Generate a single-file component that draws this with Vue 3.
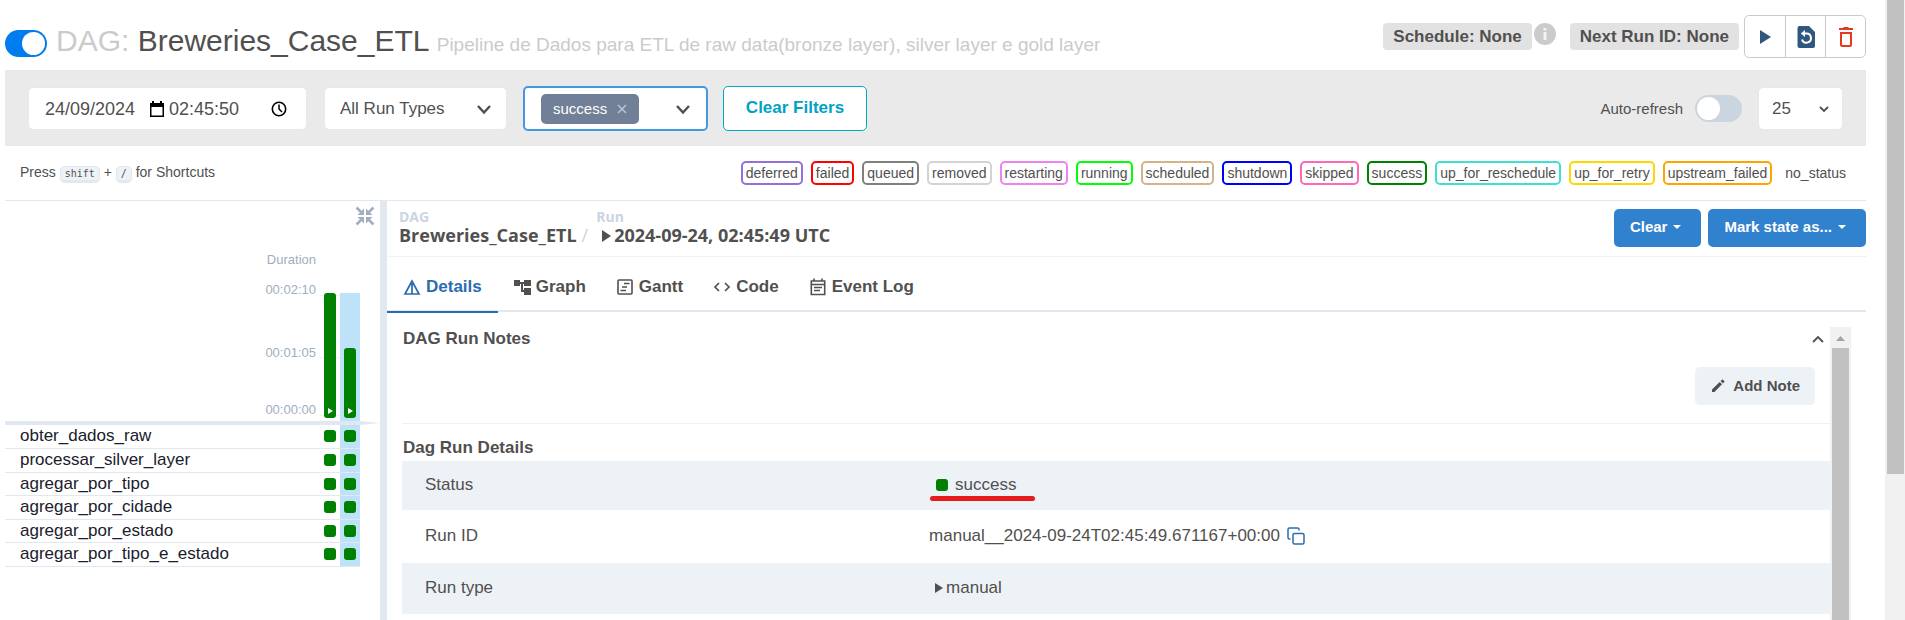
<script setup>
import { ref } from 'vue'

const dagEnabled = ref(true)
const autoRefresh = ref(false)
const runDate = ref('24/09/2024')
const runTime = ref('02:45:50')

const states = [
  { name: 'deferred', color: 'mediumpurple' },
  { name: 'failed', color: 'red' },
  { name: 'queued', color: 'gray' },
  { name: 'removed', color: 'lightgrey' },
  { name: 'restarting', color: 'violet' },
  { name: 'running', color: 'lime' },
  { name: 'scheduled', color: 'tan' },
  { name: 'shutdown', color: 'blue' },
  { name: 'skipped', color: 'hotpink' },
  { name: 'success', color: 'green' },
  { name: 'up_for_reschedule', color: 'turquoise' },
  { name: 'up_for_retry', color: 'gold' },
  { name: 'upstream_failed', color: 'orange' },
  { name: 'no_status', color: 'transparent' },
]

const tasks = [
  'obter_dados_raw',
  'processar_silver_layer',
  'agregar_por_tipo',
  'agregar_por_cidade',
  'agregar_por_estado',
  'agregar_por_tipo_e_estado',
]

const runs = [
  { id: 1, height: 125, selected: false },
  { id: 2, height: 70, selected: true },
]
</script>

<template>
  <div class="page">
    <div class="content">
      <header class="dag-header">
        <input v-model="dagEnabled" class="switch switch-dag" type="checkbox" aria-label="Pause or unpause DAG" />
        <h1 class="title">
          <span class="muted">DAG:</span> Breweries_Case_ETL
          <small class="muted">Pipeline de Dados para ETL de raw data(bronze layer), silver layer e gold layer</small>
        </h1>
        <div class="header-side">
          <span class="label">Schedule: None</span>
          <svg class="info" viewBox="0 0 22 22" aria-hidden="true">
            <circle cx="11" cy="11" r="11" fill="#cbcbcb" />
            <path d="M9.500 5h3v2.500h-3zM9.500 9h3v8h-3z" fill="#f3f3f3" />
          </svg>
          <span class="label">Next Run ID: None</span>
          <div class="btn-group">
            <button type="button" aria-label="Trigger DAG">
              <svg width="24" height="24" viewBox="0 0 24 24"><path d="M7 5l11 7-11 7z" fill="#30587f" /></svg>
            </button>
            <button type="button" aria-label="Reparse DAG">
              <svg width="24" height="24" viewBox="0 0 24 24">
                <path d="M5.500 1H15l6 6v14a2 2 0 0 1-2 2H5.500a2 2 0 0 1-2-2V3a2 2 0 0 1 2-2z" fill="#30587f" />
                <path d="M8 14.500a4.600 4.600 0 1 0 4.500-6H9.500" fill="none" stroke="#fff" stroke-width="2" />
                <path d="M11 5v7L6.800 8.500z" fill="#fff" />
              </svg>
            </button>
            <button type="button" aria-label="Delete DAG">
              <svg width="24" height="24" viewBox="0 0 24 24">
                <path d="M5 3h4l1-1h4l1 1h4v2H5zM6 7h12v13a2 2 0 0 1-2 2H8a2 2 0 0 1-2-2zM8 9v11h8V9z" fill="#e43921" fill-rule="evenodd" />
              </svg>
            </button>
          </div>
        </div>
      </header>

      <section class="filters">
        <div class="field datetime">
          <input v-model="runDate" class="date" type="text" aria-label="Base date" />
          <svg width="16" height="18" viewBox="0 0 16 18"><path d="M3 1h2v2h6V1h2v2h2v14H1V3h2zM2.500 7v8.500h11V7z" fill="#000" fill-rule="evenodd" /></svg>
          <input v-model="runTime" class="time" type="text" aria-label="Base time" />
          <svg width="16" height="16" viewBox="0 0 16 16" fill="none" stroke="#000">
            <circle cx="8" cy="8" r="6.700" stroke-width="1.600" /><path d="M8 3.500V8l3 3" stroke-width="1.500" />
          </svg>
        </div>
        <div class="select-wrap run-types">
          <select class="field" aria-label="Run types"><option>All Run Types</option></select>
          <svg class="chev" width="20" height="20" viewBox="0 0 20 20"><path d="M4 7l6 6.500L16 7" fill="none" stroke="#51504f" stroke-width="2.500" /></svg>
        </div>
        <div class="multi">
          <span class="tag">success
            <button type="button" aria-label="Remove success">
              <svg width="10" height="10" viewBox="0 0 10 10"><path d="M1 1l8 8M9 1L1 9" stroke="#bcc4d0" stroke-width="1.500" /></svg>
            </button>
          </span>
          <svg width="20" height="20" viewBox="0 0 20 20"><path d="M4 7l6 6.500L16 7" fill="none" stroke="#51504f" stroke-width="2.500" /></svg>
        </div>
        <button class="clear-filters" type="button">Clear Filters</button>
        <div class="refresh">
          <label for="auto-refresh">Auto-refresh</label>
          <input id="auto-refresh" v-model="autoRefresh" class="switch switch-refresh" type="checkbox" />
        </div>
        <div class="select-wrap count">
          <select class="field" aria-label="Number of runs"><option>25</option></select>
          <svg class="chev" width="12" height="12" viewBox="0 0 12 12"><path d="M2 4l4 4 4-4" fill="none" stroke="#51504f" stroke-width="1.800" /></svg>
        </div>
      </section>

      <section class="legend">
        <p class="shortcuts">Press <kbd>shift</kbd> + <kbd>/</kbd> for Shortcuts</p>
        <ul class="states">
          <li v-for="s in states" :key="s.name" :style="{ borderColor: s.color }">{{ s.name }}</li>
        </ul>
      </section>

      <main class="main">
        <section class="grid-panel">
          <button class="collapse" type="button" aria-label="Collapse details">
            <svg width="20" height="20" viewBox="0 0 20 20" fill="none" stroke="#a0aec0" stroke-width="2.500">
              <path d="M1.500 1.500L8 8M18.500 1.500L12 8M1.500 18.500L8 12M18.500 18.500L12 12" />
              <path d="M9 2.500V9H2.500z M11 2.500V9h6.500z M9 17.500V11H2.500z M11 17.500V11h6.500z" fill="#a0aec0" stroke="none" />
            </svg>
          </button>
          <div class="chart">
            <div class="axis">
              <span>Duration</span><span>00:02:10</span><span>00:01:05</span><span>00:00:00</span>
            </div>
            <div class="bars">
              <div v-for="r in runs" :key="r.id" class="bar-col" :class="{ selected: r.selected }">
                <div class="bar" :style="{ height: r.height + 'px' }">
                  <svg width="6" height="8" viewBox="0 0 6 8"><path d="M1 1l5 3-5 3z" fill="#fff" /></svg>
                </div>
              </div>
            </div>
          </div>
          <svg class="rule" height="4" viewBox="0 0 375 4" preserveAspectRatio="none" aria-hidden="true"><path d="M0 0h355l20 2-20 2H0z" fill="#e2e8f0" /></svg>
          <table class="tasks">
            <tbody>
              <tr v-for="t in tasks" :key="t">
                <th scope="row">{{ t }}</th>
                <td v-for="r in runs" :key="r.id" :class="{ selected: r.selected }"><span class="square"></span></td>
              </tr>
            </tbody>
          </table>
        </section>

        <section class="details">
          <div class="crumb-bar">
            <nav class="crumbs" aria-label="Breadcrumb">
              <div class="crumb-dag"><span class="crumb-label">DAG</span><a href="#">Breweries_Case_ETL</a></div>
              <span class="slash">/</span>
              <div class="crumb-run"><span class="crumb-label">Run</span>
                <a href="#"><svg class="tri" width="10" height="12" viewBox="0 0 10 12"><path d="M1 0l9 6-9 6z" fill="#51504f" /></svg>2024-09-24, 02:45:49 UTC</a>
              </div>
            </nav>
            <div class="actions">
              <button type="button">Clear <svg width="8" height="4" viewBox="0 0 8 4"><path d="M0 0h8L4 4z" fill="#fff" /></svg></button>
              <button type="button">Mark state as... <svg width="8" height="4" viewBox="0 0 8 4"><path d="M0 0h8L4 4z" fill="#fff" /></svg></button>
            </div>
          </div>

          <div class="tabs" role="tablist">
            <button class="active" type="button" role="tab" aria-selected="true">
              <svg width="18" height="18" viewBox="0 0 18 18" fill="none" stroke="#2b6cb0" stroke-width="1.700"><path d="M9 3L2 16h14zM9 3v13" /></svg>Details
            </button>
            <button type="button" role="tab" aria-selected="false">
              <svg width="18" height="18" viewBox="0 0 18 18"><path d="M1 2h6v2h4V2h7v6h-7V6h-1v6h1v-2h7v7h-7v-3H8V6H7v2H1z" fill="#51504f" /></svg>Graph
            </button>
            <button type="button" role="tab" aria-selected="false">
              <svg width="18" height="18" viewBox="0 0 18 18" fill="none" stroke="#51504f"><rect x="2" y="2" width="14" height="14" rx="1" stroke-width="1.600" /><path d="M8 5.500h5.500M6 9h5M4.500 12.500H10" stroke-width="1.700" /></svg>Gantt
            </button>
            <button type="button" role="tab" aria-selected="false">
              <svg width="18" height="18" viewBox="0 0 18 18" fill="none" stroke="#51504f" stroke-width="1.700"><path d="M6 5L2 9l4 4M12 5l4 4-4 4" /></svg>Code
            </button>
            <button type="button" role="tab" aria-selected="false">
              <svg width="18" height="18" viewBox="0 0 18 18" fill="none" stroke="#51504f"><path d="M2.300 3h13.400v13.500H2.300z" stroke-width="1.600" /><path d="M5 .5V3M13 .5V3M2 6.500h14" stroke-width="1.600" /><path d="M5 9.500h8M5 12.500h6" stroke-width="1.500" /></svg>Event Log
            </button>
          </div>

          <div class="scroll-area">
            <div class="scroll-content">
              <div class="notes">
                <div class="notes-head">
                  <h2>DAG Run Notes</h2>
                  <button class="toggle" type="button" aria-label="Collapse notes">
                    <svg width="12" height="8" viewBox="0 0 12 8"><path d="M1 7l5-5 5 5" fill="none" stroke="#51504f" stroke-width="1.800" /></svg>
                  </button>
                </div>
                <button class="add-note" type="button">
                  <svg width="14" height="14" viewBox="0 0 14 14"><path d="M1 10.500L8.700 3l2.300 2.300L3.500 13H1zM9.500 2L11 .8q.5-.4 1 0L13.200 2q.5.500 0 1L12 4.500z" fill="#51504f" /></svg>Add Note
                </button>
              </div>
              <h2 class="details-title">Dag Run Details</h2>
              <table class="info-table">
                <tbody>
                  <tr>
                    <th scope="row">Status</th>
                    <td><span class="status"><span class="square"></span>success</span></td>
                  </tr>
                  <tr class="id-row">
                    <th scope="row">Run ID</th>
                    <td>
                      <span class="run-id">manual__2024-09-24T02:45:49.671167+00:00
                        <button type="button" aria-label="Copy run ID">
                          <svg width="18" height="18" viewBox="0 0 18 18" fill="none" stroke="#2b6cb0" stroke-width="1.500"><rect x="6" y="6.500" width="11" height="10.500" rx="1.500" /><path d="M3.500 12H2.500a1.500 1.500 0 0 1-1.500-1.500v-8A1.500 1.500 0 0 1 2.500 1h8A1.500 1.500 0 0 1 12 2.500v1" /></svg>
                        </button>
                      </span>
                    </td>
                  </tr>
                  <tr class="type-row">
                    <th scope="row">Run type</th>
                    <td><span class="run-type"><svg class="tri" width="9" height="10" viewBox="0 0 9 10"><path d="M1 0l8 5-8 5z" fill="#51504f" /></svg>manual</span></td>
                  </tr>
                </tbody>
              </table>
            </div>
            <div class="inner-bar" aria-hidden="true">
              <svg width="21" height="21" viewBox="0 0 21 21"><path d="M6 14l4.500-5 4.500 5z" fill="#a3a3a3" /></svg>
              <div class="thumb"></div>
            </div>
          </div>
        </section>
      </main>
    </div>
    <div class="page-bar" aria-hidden="true"><div class="thumb"></div></div>
  </div>
</template>

<style>
html, body { margin: 0; }
body { overflow: hidden; }
</style>

<style scoped>
* { box-sizing: border-box; }
.page {
  display: flex;
  height: 100vh;
  overflow: hidden;
  background: #fff;
  color: #51504f;
  font-family: "Liberation Sans", Arial, sans-serif;
  font-size: 17px;
  line-height: 24px;
}
button, input, select { font: inherit; color: inherit; margin: 0; }
button { padding: 0; border: 0; background: none; cursor: pointer; }
svg { display: block; flex: none; }
h1, h2, p, ul { margin: 0; padding: 0; }
.content { flex: 1; min-width: 0; display: flex; flex-direction: column; padding: 0 19px 0 5px; }

.switch { appearance: none; flex: none; display: flex; height: 27px; padding: 2px; border-radius: 14px; background: #cbd5e0; }
.switch::before { content: ""; width: 23px; height: 23px; border-radius: 50%; background: #fff; }
.switch:checked { justify-content: flex-end; background: #017cee; }
.switch-dag { width: 42px; margin-top: 15px; }
.switch-refresh { width: 47px; }

.dag-header { display: flex; flex: none; align-items: flex-start; height: 70px; padding-top: 15px; }
.title { flex: 1; margin: 8px 0 0 9px; font-size: 30px; font-weight: 400; line-height: 36px; white-space: nowrap; }
.title small { font-size: 19px; }
.muted { color: #cbcbcb; }
.header-side { display: flex; align-items: flex-start; }
.label { margin-top: 8px; padding: 0 10px; border-radius: 4px; background: #e2e2e2; font-weight: 700; line-height: 27px; white-space: nowrap; }
.info { width: 22px; height: 22px; margin: 8px 14px 0 2px; }
.btn-group { display: flex; margin-left: 5px; border: 1px solid #cbcbcb; border-radius: 5px; }
.btn-group button { display: grid; place-items: center; width: 40px; height: 41px; }
.btn-group button + button { border-left: 1px solid #cbcbcb; }

.filters { display: flex; flex: none; align-items: center; height: 76px; padding: 0 23px; border-top: 1px solid #e2e8f0; background: #eaeaea; }
.field { height: 43px; border: 1px solid #e2e8f0; border-radius: 5px; background: #fff; }
.datetime { display: flex; align-items: center; width: 279px; padding: 0 20px 0 16px; }
.datetime input { padding: 0; border: 0; outline: 0; background: none; font-size: 18px; }
.date { width: 104px; }
.time { width: 102px; margin-left: 4px; }
.select-wrap { display: grid; align-items: center; }
.select-wrap > * { grid-area: 1 / 1; }
.select-wrap select { appearance: none; width: 100%; padding: 0 15px; }
.chev { justify-self: end; pointer-events: none; }
.run-types { width: 183px; margin-left: 17px; }
.run-types .chev { margin-right: 13px; }
.count { width: 85px; margin-left: 16px; }
.count select { padding: 0 13px; }
.count .chev { margin-right: 13px; }
.multi { display: flex; align-items: center; justify-content: space-between; width: 185px; height: 45px; margin-left: 16px; padding: 0 13px 0 16px; border: 2px solid #4299e1; border-radius: 5px; background: #fff; }
.tag { display: flex; align-items: center; gap: 10px; height: 30px; padding: 0 12px; border-radius: 5px; background: #718096; color: #fff; font-size: 15px; }
.clear-filters { width: 144px; height: 45px; margin-left: 15px; padding-bottom: 2px; border: 1px solid #00a7c7; border-radius: 5px; background: #fff; color: #00a2c6; font-weight: 700; }
.refresh { display: flex; align-items: center; gap: 12px; margin-left: auto; font-size: 15px; }

.legend { display: flex; flex: none; align-items: center; justify-content: space-between; height: 55px; padding: 0 15px; border-bottom: 1px solid #e2e8f0; font-size: 14px; }
.shortcuts { white-space: nowrap; }
kbd { padding: 1px 4px; border: 1px solid #e2e8f0; border-bottom-width: 3px; border-radius: 5px; background: #edf2f7; font-family: "DejaVu Sans Mono", monospace; font-size: 10px; }
.states { display: flex; gap: 8px; list-style: none; }
.states li { padding: 0 3px; border: 2px solid; border-radius: 5px; line-height: 20px; white-space: nowrap; }

.main { flex: 1; display: flex; min-height: 0; }
.grid-panel { display: flex; flex-direction: column; width: 382px; flex: none; border-right: 7px solid #e2e8f0; }
.collapse { align-self: flex-end; margin: 5px 5px 0 0; }
.chart { display: flex; justify-content: flex-end; padding-right: 20px; color: #a0aec0; font-size: 13px; }
.axis { display: grid; grid-template-rows: 30px 63px 57px 21px; margin: 24px 4px 0 0; line-height: 20px; text-align: right; }
.bars {
  display: flex; align-self: flex-end; height: 128px;
  background:
    linear-gradient(#edf2f7, #edf2f7) 0 2px / 100% 1px no-repeat,
    linear-gradient(#edf2f7, #edf2f7) 0 64px / 100% 1px no-repeat,
    linear-gradient(#edf2f7, #edf2f7) 0 122px / 100% 1px no-repeat;
}
.bar-col { display: flex; align-items: flex-end; justify-content: center; width: 20px; padding-bottom: 3px; }
.selected { background: #bee3f8; }
.bar { display: flex; align-items: flex-end; justify-content: center; width: 12px; padding-bottom: 3px; border-radius: 3px; background: green; }
.rule { width: 100%; }
.tasks { width: 355px; border-collapse: collapse; color: #1a202c; }
.tasks tr { height: 23px; border-bottom: 1px solid #e2e8f0; }
.tasks tr:nth-child(even) { height: 24px; }
.tasks th { padding: 0 0 0 15px; font-weight: 400; line-height: 22px; text-align: left; }
.tasks td { width: 20px; padding: 0 4px; }
.square { display: block; width: 12px; height: 12px; border-radius: 3px; background: green; }

.details { flex: 1; min-width: 0; display: flex; flex-direction: column; }
.crumb-bar { display: flex; flex: none; align-items: flex-start; justify-content: space-between; height: 56px; padding: 8px 0 0 12px; border-bottom: 1px solid #edf2f7; }
.crumbs { display: flex; align-items: flex-end; font-family: "Open Sans", "Noto Sans", sans-serif; font-size: 18px; font-weight: 700; line-height: 20px; white-space: nowrap; }
.crumb-label { display: block; color: #cbd5e0; font-size: 14px; line-height: 16px; }
.crumbs a { display: flex; align-items: center; color: inherit; text-decoration: none; }
.slash { margin: 0 8px 0 5px; color: #cbd5e0; font-weight: 400; }
.crumb-run .tri { margin: 2px 3px 0 5px; }
.actions { display: flex; gap: 7px; }
.actions button { display: flex; align-items: center; gap: 6px; height: 38px; padding: 0 20px 2px 16px; border-radius: 5px; background: #3182ce; color: #fff; font-size: 15px; font-weight: 700; }
.tabs { display: flex; flex: none; height: 55px; border-bottom: 2px solid #e2e8f0; font-weight: 700; }
.tabs button { display: flex; align-items: center; gap: 5px; height: 56px; padding: 5px 15px 0; border-bottom: 2px solid transparent; font-weight: 700; }
.tabs .active { padding: 5px 16px 0; border-color: #2b6cb0; color: #2b6cb0; }

.scroll-area { flex: 1; display: flex; min-height: 0; margin: 15px 15px 0 15px; }
.scroll-content { flex: 1; min-width: 0; overflow: hidden; }
h2 { font-size: 17px; line-height: 24px; font-weight: 700; }
.notes { display: flex; flex-direction: column; height: 97px; border-bottom: 1px solid #edf2f7; }
.notes-head { display: flex; align-items: center; justify-content: space-between; padding: 0 6px 0 1px; }
.add-note { display: flex; align-items: center; gap: 8px; align-self: flex-end; height: 38px; margin: 16px 15px 0 0; padding: 0 15px 0 16px; border-radius: 5px; background: #edf2f7; font-size: 15px; font-weight: 700; }
.details-title { padding: 12px 0 1px 1px; }
.info-table { width: 100%; border-collapse: collapse; table-layout: fixed; }
.info-table tr { height: 49px; }
.info-table .id-row { height: 53px; }
.info-table .type-row { height: 51px; }
.info-table tr:nth-child(odd) { background: #edf2f7; }
.info-table th { width: 36%; padding: 0 0 2px 23px; font-weight: 400; text-align: left; }
.info-table td { padding: 0 0 2px 13px; }
.status { position: relative; display: flex; align-items: center; gap: 7px; padding-left: 7px; }
.status::after { content: ""; position: absolute; top: 23px; left: 1px; width: 105px; height: 5px; border-radius: 3px; background: #e81c1c; }
.run-id { display: flex; align-items: center; gap: 7px; }
.run-type { display: flex; align-items: center; gap: 3px; padding-left: 5px; }
.inner-bar { display: flex; flex-direction: column; width: 21px; padding: 0 2px; background: #f1f1f1; }
.inner-bar svg { align-self: center; }
.inner-bar .thumb { flex: 1; background: #c1c1c1; }
.page-bar { width: 20px; padding: 0 1px 0 2px; background: #f1f1f1; }
.page-bar .thumb { height: 474px; background: #c1c1c1; }
</style>
